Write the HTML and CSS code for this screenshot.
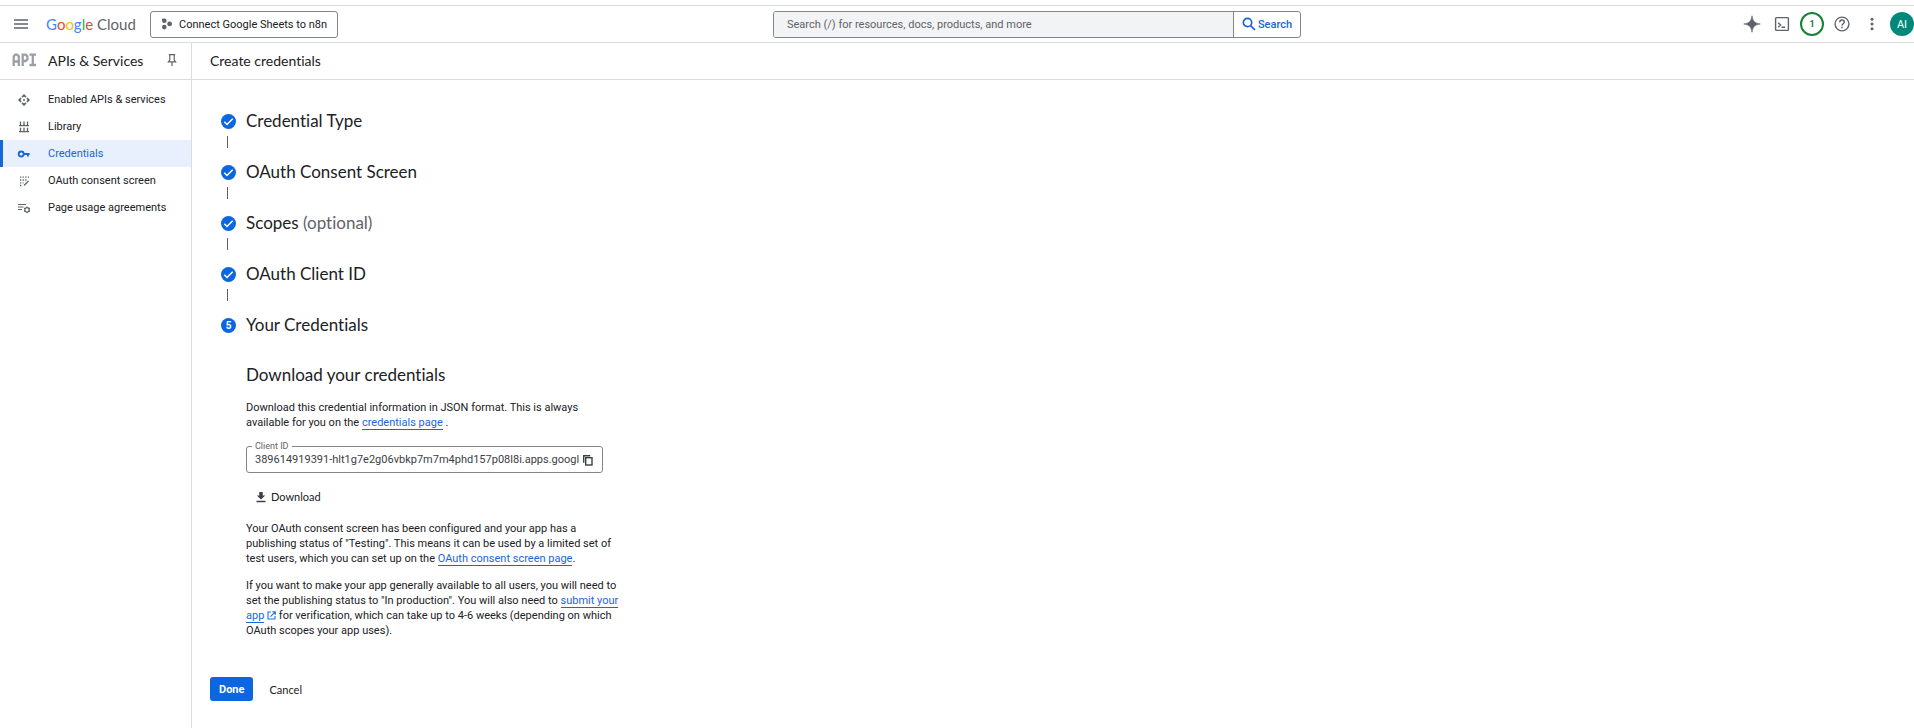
FILE: index.html
```
<!DOCTYPE html>
<html lang="en">
<head>
    <meta charset="UTF-8">
    <meta name="viewport" content="width=device-width, initial-scale=1.0">
    <title>Create credentials – APIs &amp; Services</title>
    <link rel="stylesheet" href="styles.css">
</head>
<body>
    <header class="topbar">
        <div class="topbar-left">
            <button class="icon-button" aria-label="Main menu">
                <svg width="18" height="18" viewBox="0 0 18 18"><path d="M2 5h14M2 9h14M2 13h14" stroke="#5f6368" stroke-width="1.5"/></svg>
            </button>
            <a class="logo" href="#"><span class="g-blue">G</span><span class="g-red">o</span><span class="g-yellow">o</span><span class="g-blue">g</span><span class="g-green">l</span><span class="g-red">e</span> Cloud</a>
            <button class="project-button">
                <svg width="12" height="12" viewBox="0 0 12 12" fill="#5f6368"><circle cx="3.3" cy="2.8" r="2.3"/><circle cx="8.6" cy="5.9" r="2.4"/><circle cx="3.3" cy="9.1" r="2.3"/><path d="M1 2.8v-2h2.3z"/></svg>
                Connect Google Sheets to n8n
            </button>
        </div>
        <form class="search">
            <input class="search-input" type="text" aria-label="Search" placeholder="Search (/) for resources, docs, products, and more">
            <button class="search-button" type="button">
                <svg width="14" height="14" viewBox="0 0 14 14" fill="none" stroke="#1a67d2" stroke-width="1.7"><circle cx="5.5" cy="5.5" r="4.2"/><path d="M8.6 8.6L13 13"/></svg>
                Search
            </button>
        </form>
        <div class="topbar-right">
            <button class="icon-button" aria-label="Gemini">
                <svg width="18" height="18" viewBox="0 0 18 18"><path d="M9 .8C9.6 6 12 8.4 17.2 9 12 9.6 9.6 12 9 17.2 8.4 12 6 9.6.8 9 6 8.4 8.4 6 9 .8z" fill="#5f6368" stroke="#5f6368" stroke-width=".6"/></svg>
            </button>
            <button class="icon-button" aria-label="Cloud Shell">
                <svg width="18" height="18" viewBox="0 0 18 18" fill="none" stroke="#5f6368" stroke-width="1.4"><rect x="2.6" y="2.6" width="12.8" height="12.8" rx=".8"/><path d="M5.2 7.8l2.4 2.2-2.4 2.2M8.5 12.3h3.6"/></svg>
            </button>
            <button class="notifications" aria-label="Notifications">1</button>
            <button class="icon-button" aria-label="Help">
                <svg width="18" height="18" viewBox="0 0 18 18" fill="none" stroke="#5f6368" stroke-width="1.4"><circle cx="9" cy="9" r="6.9"/><path d="M6.7 7.3c0-1.4 1-2.3 2.3-2.3s2.3.9 2.3 2.1c0 1.6-2.3 1.7-2.3 3.6"/><path d="M9 11.8v1.5"/></svg>
            </button>
            <button class="icon-button" aria-label="More options">
                <svg width="18" height="18" viewBox="0 0 18 18" fill="#5f6368"><circle cx="9" cy="4.2" r="1.5"/><circle cx="9" cy="9" r="1.5"/><circle cx="9" cy="13.8" r="1.5"/></svg>
            </button>
            <button class="avatar" aria-label="Account">AI</button>
        </div>
    </header>

    <div class="layout">
        <aside class="sidebar">
            <div class="sidebar-header">
                <svg width="24" height="14" viewBox="0 0 24 14" fill="none" stroke="#9aa0a6" stroke-width="2.3"><path d="M1.7 13V3.5L3.2 1.7h2.1L6.8 3.5V13M1.7 8.5H6.8M10.7 13V1.7h3l1.7 1.6v3l-1.7 1.7h-3M17.5 1.7H24M20.8 1.7V12M17.5 12H24"/></svg>
                <span class="sidebar-title">APIs &amp; Services</span>
                <button class="icon-button" aria-label="Pin menu">
                    <svg width="14" height="14" viewBox="0 0 14 14" fill="none" stroke="#5f6368" stroke-width="1.2"><path d="M3.8 1.6h6.4M4.8 1.6V7L3.4 8.8h7.2L9.2 7V1.6M7 8.8V13"/></svg>
                </button>
            </div>
            <nav class="nav">
                <a class="nav-item" href="#">
                    <svg width="14" height="14" viewBox="0 0 14 14" fill="#5f6368"><path d="M7 1l2.5 2.5-1.2 1.2L7 3.4 5.700 4.700 4.500 3.500zM7 13l2.500-2.500-1.200-1.200L7 10.600 5.700 9.300l-1.200 1.200zM1 7l2.500-2.500 1.200 1.200L3.400 7l1.300 1.300-1.200 1.200zM13 7l-2.500-2.500-1.200 1.200L10.600 7 9.300 8.300l1.200 1.200z"/><circle cx="7" cy="7" r="1"/></svg>
                    Enabled APIs &amp; services
                </a>
                <a class="nav-item" href="#">
                    <svg width="14" height="14" viewBox="0 0 14 14" fill="none" stroke="#5f6368" stroke-width="1.3"><path d="M2 5.7h10M2 11.7h10M3.5 1.5v4M7 1.5v4M10.5 1.5v4M3.5 7.7v4M7 7.7v4M10.5 7.7v4"/></svg>
                    Library
                </a>
                <a class="nav-item active" href="#" aria-current="page">
                    <svg width="14" height="14" viewBox="0 0 14 14" fill="none" stroke="#1967d2" stroke-width="1.8"><circle cx="4.2" cy="7" r="2.5"/><path d="M6.7 7H12.6M10.9 7v2.6"/></svg>
                    Credentials
                </a>
                <a class="nav-item" href="#">
                    <svg width="14" height="14" viewBox="0 0 14 14" fill="none" stroke="#5f6368" stroke-width="1.3"><path d="M3 3.2h9M3 6h6.5M3 8.8h3.5M3 11.5h2" stroke-dasharray="1.3 1.3"/><path d="M7 11.5L11.5 7"/></svg>
                    OAuth consent screen
                </a>
                <a class="nav-item" href="#">
                    <svg width="14" height="14" viewBox="0 0 14 14" fill="none" stroke="#5f6368" stroke-width="1.2"><path d="M1 3.5h8M1 6h5.5M1 8.5h4"/><circle cx="10" cy="8.8" r="2.2"/><path d="M10 5.4v1.3M10 10.9v1.3M7.1 7.1l1.1.6M11.8 9.9l1.1.6M7.1 10.5l1.1-.6M11.8 7.7l1.1-.6"/></svg>
                    Page usage agreements
                </a>
            </nav>
        </aside>

        <main class="main">
            <h1 class="page-title">Create credentials</h1>
            <div class="content">
                <ol class="steps">
                    <li class="step">
                        <svg class="step-icon" width="15" height="15" viewBox="0 0 15 15"><circle cx="7.5" cy="7.5" r="7.5" fill="#0b66e0"/><path d="M3.3 7.8l2.7 2.7L11.7 4.7" fill="none" stroke="#fff" stroke-width="1.5"/></svg>
                        <h2 class="step-title">Credential Type</h2>
                    </li>
                    <li class="step">
                        <svg class="step-icon" width="15" height="15" viewBox="0 0 15 15"><circle cx="7.5" cy="7.5" r="7.5" fill="#0b66e0"/><path d="M3.3 7.8l2.7 2.7L11.7 4.7" fill="none" stroke="#fff" stroke-width="1.5"/></svg>
                        <h2 class="step-title">OAuth Consent Screen</h2>
                    </li>
                    <li class="step">
                        <svg class="step-icon" width="15" height="15" viewBox="0 0 15 15"><circle cx="7.5" cy="7.5" r="7.5" fill="#0b66e0"/><path d="M3.3 7.8l2.7 2.7L11.7 4.7" fill="none" stroke="#fff" stroke-width="1.5"/></svg>
                        <h2 class="step-title">Scopes <span class="optional">(optional)</span></h2>
                    </li>
                    <li class="step">
                        <svg class="step-icon" width="15" height="15" viewBox="0 0 15 15"><circle cx="7.5" cy="7.5" r="7.5" fill="#0b66e0"/><path d="M3.3 7.8l2.7 2.7L11.7 4.7" fill="none" stroke="#fff" stroke-width="1.5"/></svg>
                        <h2 class="step-title">OAuth Client ID</h2>
                    </li>
                    <li class="step">
                        <span class="step-icon step-number">5</span>
                        <h2 class="step-title">Your Credentials</h2>
                    </li>
                </ol>

                <section class="details">
                    <h3 class="details-title">Download your credentials</h3>
                    <p>Download this credential information in JSON format. This is always available for you on the <a class="link" href="#">credentials page</a> .</p>
                    <div class="field">
                        <label class="field-label" for="clientId">Client ID</label>
                        <input class="field-input" id="clientId" type="text" readonly value="389614919391-hlt1g7e2g06vbkp7m7m4phd157p08l8i.apps.googl">
                        <button class="icon-button" aria-label="Copy to clipboard">
                            <svg width="12" height="12" viewBox="0 0 12 12" fill="none" stroke="#3c4043" stroke-width="1.4"><rect x="3.7" y="3.7" width="6.3" height="7.3"/><path d="M1.7 8.7v-7h6.5"/></svg>
                        </button>
                    </div>
                    <button class="download-button">
                        <svg width="12" height="12" viewBox="0 0 12 12" fill="#3c4043"><path d="M4.3 1h3.4v3.5h2.5L6 8.6 1.8 4.5h2.5zM1.5 9.8h9v1.4h-9z"/></svg>
                        Download
                    </button>
                    <p>Your OAuth consent screen has been configured and your app has a publishing status of "Testing". This means it can be used by a limited set of test users, which you can set up on the <a class="link" href="#">OAuth consent screen page</a>.</p>
                    <p>If you want to make your app generally available to all users, you will need to set the publishing status to "In production". You will also need to <a class="link" href="#">submit your app</a> <svg class="external" width="9" height="9" viewBox="0 0 9 9" fill="none" stroke="#1a73e8" stroke-width="1.1"><path d="M4 1H1v7h7V5M5.3.8h3v3M8.2.9L3.5 5.6"/></svg> for verification, which can take up to 4-6 weeks (depending on which OAuth scopes your app uses).</p>
                </section>
            </div>
            <div class="actions">
                <button class="done-button">Done</button>
                <button class="cancel-button">Cancel</button>
            </div>
        </main>
    </div>
</body>
</html>
```
FILE: styles.css
```
* {
    box-sizing: border-box;
}

body {
    margin: 0;
    padding-top: 5px;
    min-height: 100vh;
    display: flex;
    flex-direction: column;
    font-family: Roboto, sans-serif;
    font-size: 11px;
    line-height: 15px;
    color: #202124;
    background-color: #fff;
    font-variant-ligatures: none;
    overflow-x: hidden;
}

button,
input {
    font-family: inherit;
    font-size: inherit;
    line-height: inherit;
    padding: 0;
    border: none;
    background: none;
}

button {
    color: inherit;
    cursor: pointer;
}

svg {
    display: block;
    flex-shrink: 0;
}

a {
    text-decoration: none;
}

.icon-button {
    display: flex;
    align-items: center;
    justify-content: center;
}

/* Top bar */
.topbar {
    display: grid;
    grid-template-columns: 773px minmax(200px, 528px) 1fr;
    align-items: center;
    height: 38px;
    border-top: 1px solid #dadce0;
    border-bottom: 1px solid #dadce0;
}

.topbar-left {
    display: flex;
    align-items: center;
    padding-left: 12px;
}

.logo {
    width: 104px;
    margin-left: 16px;
    font-family: Lato, sans-serif;
    font-size: 15px;
    color: #5f6368;
    white-space: nowrap;
}

.g-blue {
    color: #4285f4;
}

.g-red {
    color: #ea4335;
}

.g-yellow {
    color: #fbbc04;
}

.g-green {
    color: #34a853;
}

.project-button {
    display: flex;
    align-items: center;
    gap: 6px;
    height: 27px;
    padding: 0 10px;
    border: 1px solid #80868b;
    border-radius: 3px;
    white-space: nowrap;
}

.search {
    display: flex;
    height: 27px;
    border: 1px solid #80868b;
    border-radius: 3px;
    overflow: hidden;
}

.search-input {
    flex: 1;
    min-width: 0;
    padding-left: 13px;
    background-color: #f1f3f4;
    border-right: 1px solid #80868b;
}

.search-input::placeholder {
    color: #5f6368;
    opacity: 1;
}

.search-button {
    display: flex;
    align-items: center;
    justify-content: center;
    gap: 2px;
    width: 66px;
    font-weight: 500;
    color: #1967d2;
}

.topbar-right {
    display: flex;
    align-items: center;
    justify-content: flex-end;
    gap: 12px;
}

.notifications {
    width: 24px;
    height: 24px;
    margin: 0 -3px;
    border: 2px solid #188038;
    border-radius: 50%;
    font-size: 9px;
    font-weight: 700;
    color: #188038;
}

.avatar {
    width: 24px;
    height: 24px;
    margin-left: -3px;
    border-radius: 50%;
    background-color: #00897b;
    color: #fff;
}

/* Sidebar */
.layout {
    display: flex;
    flex: 1;
}

.sidebar {
    width: 192px;
    flex-shrink: 0;
    border-right: 1px solid #dadce0;
}

.sidebar-header {
    display: flex;
    align-items: center;
    height: 37px;
    padding: 0 12px 2px;
    border-bottom: 1px solid #dadce0;
}

.sidebar-title {
    flex: 1;
    margin-left: 12px;
    font-family: Lato, sans-serif;
    font-size: 14px;
}

.nav {
    padding-top: 6px;
}

.nav-item {
    display: flex;
    align-items: center;
    gap: 17px;
    height: 27px;
    padding-left: 14px;
    border-left: 3px solid transparent;
    color: #202124;
}

.nav-item.active {
    border-left-color: #1967d2;
    background-color: #e8f0fe;
    color: #1967d2;
}

/* Main content */
.main {
    flex: 1;
    min-width: 0;
}

.page-title {
    display: flex;
    align-items: center;
    height: 37px;
    margin: 0;
    padding: 0 18px 2px;
    border-bottom: 1px solid #dadce0;
    font-family: Lato, sans-serif;
    font-size: 14px;
    font-weight: 400;
}

.content {
    padding: 29px 29px 0;
}

.steps {
    margin: 0;
    padding: 0;
    list-style: none;
}

.step {
    display: grid;
    grid-template-columns: 15px 1fr;
    column-gap: 10px;
    align-items: center;
}

.step:not(:last-child)::after {
    content: "";
    width: 1px;
    height: 12px;
    margin: 3px 0 12px 6px;
    background-color: #5f6368;
}

.step-title,
.details-title {
    margin: 0;
    font-family: Lato, sans-serif;
    font-size: 17px;
    font-weight: 400;
    line-height: 24px;
}

.step-number {
    height: 15px;
    border-radius: 50%;
    background-color: #0b66e0;
    color: #fff;
    font-size: 10px;
    font-weight: 700;
    text-align: center;
}

.optional {
    color: #5f6368;
}

.details {
    max-width: 399px;
    padding: 26px 0 0 25px;
}

.details p {
    margin: 0 0 12px;
}

.details .details-title {
    margin-bottom: 13px;
}

.link {
    color: #1a67d2;
    border-bottom: 1px solid #1a67d2;
}

.external {
    display: inline-block;
    vertical-align: -1px;
}

.field {
    position: relative;
    display: flex;
    align-items: center;
    max-width: 357px;
    height: 27px;
    margin: 16px 0;
    padding: 0 8px;
    border: 1px solid #80868b;
    border-radius: 3px;
}

.field-label {
    position: absolute;
    top: -8px;
    left: 5px;
    padding: 0 3px;
    background-color: #fff;
    font-size: 9px;
    color: #5f6368;
}

.field-input {
    flex: 1;
    min-width: 0;
    color: #3c4043;
}

.download-button {
    display: flex;
    align-items: center;
    gap: 4px;
    margin: 0 0 17px 9px;
    font-family: Lato, sans-serif;
    color: #202124;
}

.actions {
    display: flex;
    align-items: center;
    gap: 16px;
    padding: 27px 18px 16px;
}

.done-button {
    height: 24px;
    padding: 0 9px;
    border-radius: 3px;
    background-color: #0b66e0;
    color: #fff;
    font-weight: 700;
}

.cancel-button {
    font-family: Lato, sans-serif;
    color: #202124;
}
```
